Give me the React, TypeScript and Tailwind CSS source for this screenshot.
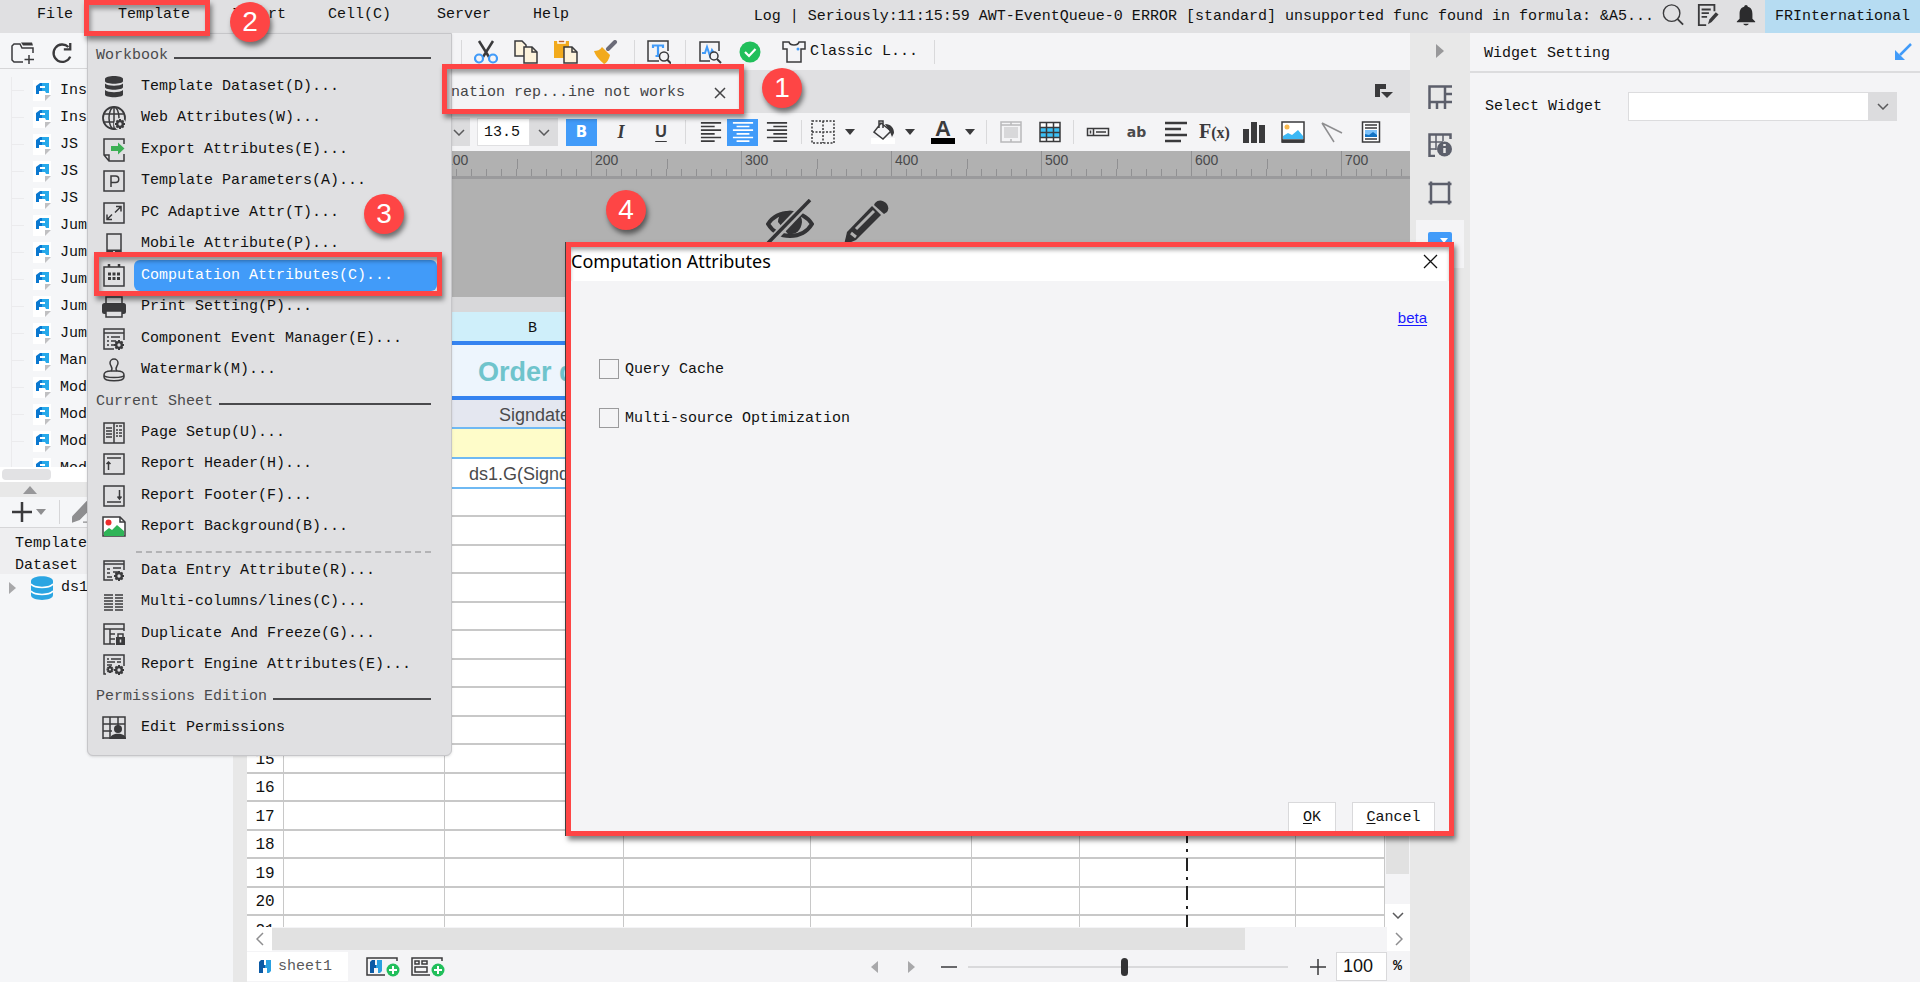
import type { ReactNode } from 'react'

const INK = '#3a3a3c'
const BLUE = '#419bf9'

const TREE = ['Ins', 'Ins', 'JS', 'JS', 'JS', 'Jum', 'Jum', 'Jum', 'Jum', 'Jum', 'Man', 'Mod', 'Mod', 'Mod', 'Mod']

function Icon({ size = 24, children }: { size?: number; children: ReactNode }) {
  return (
    <svg
      width={size}
      height={size}
      viewBox="0 0 24 24"
      fill="none"
      stroke={INK}
      strokeWidth="1.5"
      className="shrink-0"
      aria-hidden="true"
    >
      {children}
    </svg>
  )
}

function Gear({ x, y, r = 4 }: { x: number; y: number; r?: number }) {
  return (
    <g stroke="none">
      {[0, 45, 90, 135].map((a) => (
        <rect
          key={a}
          x={x - 1}
          y={y - r - 1}
          width="2"
          height={2 * r + 2}
          fill={INK}
          transform={`rotate(${a} ${x} ${y})`}
        />
      ))}
      <circle cx={x} cy={y} r={r} fill={INK} />
      <circle cx={x} cy={y} r={r / 2.4} fill="#e0e0e2" />
    </g>
  )
}

type MenuEntry = { label: string; icon: ReactNode; active?: boolean }

const WORKBOOK: MenuEntry[] = [
  {
    label: 'Template Dataset(D)...',
    icon: (
      <g fill={INK} stroke="none">
        <path d="M3 4c0-4 18-4 18 0v2c0 3.600-18 3.600-18 0z" />
        <path d="M3 8.500c3 3 15 3 18 0V12c0 3.600-18 3.600-18 0z" />
        <path d="M3 15c3 3 15 3 18 0v4.500c0 3.600-18 3.600-18 0z" />
      </g>
    ),
  },
  {
    label: 'Web Attributes(W)...',
    icon: (
      <>
        <circle cx="12" cy="12" r="11" strokeWidth="1.800" />
        <ellipse cx="12" cy="12" rx="5" ry="11" />
        <path d="M12 1v22M2 8h20M2 16h20" />
        <circle cx="18" cy="18" r="6" fill="#e0e0e2" stroke="none" />
        <Gear x={18} y={18} />
      </>
    ),
  },
  {
    label: 'Export Attributes(E)...',
    icon: (
      <>
        <path d="M22 6V1H2v16l5 6h15v-7M2 17h5v6" />
        <path d="M9 8h7V4.500l6.500 6-6.500 6V13H9z" fill="#3cb054" stroke="none" />
      </>
    ),
  },
  {
    label: 'Template Parameters(A)...',
    icon: (
      <>
        <rect x="2" y="2" width="20" height="20" />
        <path d="M9 18V7h4.500a3 3 0 0 1 0 6.500H9" />
      </>
    ),
  },
  {
    label: 'PC Adaptive Attr(T)...',
    icon: (
      <>
        <rect x="2" y="2" width="20" height="20" />
        <path d="M14 5.500h5v5M19 5.500l-6 6M10 18.500H5v-5M5 18.500l5-5" />
      </>
    ),
  },
  {
    label: 'Mobile Attribute(P)...',
    icon: (
      <>
        <rect x="5" y="2" width="14" height="20" />
        <path d="M5 19.500h14" strokeWidth="4" />
        <circle cx="12" cy="20" r="1" fill="#fff" stroke="none" />
      </>
    ),
  },
  {
    label: 'Computation Attributes(C)...',
    active: true,
    icon: (
      <>
        <rect x="2" y="3" width="20" height="19" />
        <path d="M7 0v3M17 0v3" strokeWidth="2.500" />
        <path d="M6 10h12M6 14.500h12" strokeWidth="3" strokeDasharray="3 1.500" />
      </>
    ),
  },
  {
    label: 'Print Setting(P)...',
    icon: (
      <>
        <rect x="4" y="2" width="16" height="7" />
        <rect y="8" width="24" height="11" rx="2.500" fill={INK} stroke="none" />
        <rect x="4" y="16" width="16" height="6" fill="#e0e0e2" />
      </>
    ),
  },
  {
    label: 'Component Event Manager(E)...',
    icon: (
      <>
        <path d="M22 13V2H2v20h10M2 6h20M5 10h2M9 10h9M5 14h2M9 14h5M5 18h2M9 18h3" />
        <Gear x={17} y={18} />
      </>
    ),
  },
  {
    label: 'Watermark(M)...',
    icon: (
      <>
        <path d="M9 13c3-3-1-5-1-8a4 4 0 0 1 8 0c0 3-4 5-1 8" />
        <path d="M9 13c-5 0-7 2-7 4s4 2.500 10 2.500 10-.5 10-2.500-2-4-7-4zM2 17v2c0 5 20 5 20 0v-2" />
      </>
    ),
  },
]

const SHEET: MenuEntry[] = [
  {
    label: 'Page Setup(U)...',
    icon: <path d="M2 2h20v20H2zM12 2v20M4 7h6M4 10h6M4 13h6M4 16h6M14 5h2M17 5h3M14 9h2M17 9h3M14 12h2M17 12h3M14 15h2M17 15h3" />,
  },
  {
    label: 'Report Header(H)...',
    icon: <path d="M2 2h20v20H2zM5 6h14M6.500 18V10M4.500 12l2-2 2 2" />,
  },
  {
    label: 'Report Footer(F)...',
    icon: <path d="M2 2h20v20H2zM5 18h14M17.500 6v9M15.500 12.500l2 2.500 2-2.500" />,
  },
  {
    label: 'Report Background(B)...',
    icon: (
      <>
        <path d="M1 2h17l5 5v14H1z" fill="#fff" />
        <path d="M18 2v5h5" />
        <circle cx="6.500" cy="7.500" r="3" fill="#ee2b2b" stroke="none" />
        <path d="M2 21v-4l5-4 3 2 5-5 7 6v5z" fill="#2fb457" stroke="none" />
      </>
    ),
  },
]

const DATA: MenuEntry[] = [
  {
    label: 'Data Entry Attribute(R)...',
    icon: (
      <>
        <path d="M22 11V2H2v19h9M2 5h20M5 10h3M11 9h8M5 14h3M11 13h5M5 18h5" />
        <Gear x={17} y={17} />
      </>
    ),
  },
  {
    label: 'Multi-columns/lines(C)...',
    icon: <path d="M2 5h9M13 5h8M2 8h9M13 8h8M2 11h9M13 11h8M2 14h9M13 14h8M2 17h9M13 17h8M2 20h9M13 20h8" />,
  },
  {
    label: 'Duplicate And Freeze(G)...',
    icon: (
      <>
        <path d="M22 9V2H2v20h11M2 7h20M8 7v15M8 12h5M8 17h5" />
        <rect x="14" y="15" width="9" height="8" fill={INK} stroke="none" />
        <path d="M16 15v-3h5v3" />
        <path d="M18.500 17.500v3" stroke="#e0e0e2" />
      </>
    ),
  },
  {
    label: 'Report Engine Attributes(E)...',
    icon: (
      <>
        <path d="M22 13V2H2v19h2M5 6h2M9 6h10M5 9h8M15 9h4M5 12h5" />
        <Gear x={8} y={16.500} r={2.500} />
        <Gear x={17} y={17} />
      </>
    ),
  },
]

const PERMISSIONS: MenuEntry[] = [
  {
    label: 'Edit Permissions',
    icon: (
      <>
        <path d="M1 23V1h22v22M1 8h22M1 15h9M8 1v22M16 1v10M1 22h8" />
        <circle cx="16" cy="13" r="4" fill={INK} stroke="none" />
        <path d="M8 23c0-7 16-7 16 0z" fill={INK} stroke="none" />
      </>
    ),
  },
]

function MenuList({ items }: { items: MenuEntry[] }) {
  return (
    <ul>
      {items.map((item) => (
        <li key={item.label} className="h-[31px] even:h-8 flex items-center pl-[14px] pr-[14px]">
          <Icon>{item.icon}</Icon>
          <button
            className={
              item.active
                ? 'ml-2 flex-1 h-[31px] rounded-md pl-[7px] text-left whitespace-nowrap bg-[#419bf9] text-white'
                : 'ml-2 flex-1 h-[31px] rounded-md pl-[7px] text-left whitespace-nowrap'
            }
          >
            {item.label}
          </button>
        </li>
      ))}
    </ul>
  )
}

function MenuHeading({ children }: { children: ReactNode }) {
  return (
    <div className="h-[31px] flex items-center gap-[6px] pl-2 pr-5 text-[#4a4a4c]">
      <span>{children}</span>
      <span className="flex-1 h-[2px] mt-1 bg-[#4a4a4c]" />
    </div>
  )
}

function TemplateMenu() {
  return (
    <div className="absolute z-20 left-[87px] top-[33px] w-[365px] pt-1.5 pb-3 bg-[#e0e0e2] border border-[#c6c6c9] rounded-b-md shadow-sm">
      <MenuHeading>Workbook</MenuHeading>
      <MenuList items={WORKBOOK} />
      <MenuHeading>Current Sheet</MenuHeading>
      <MenuList items={SHEET} />
      <div className="h-3 pt-2 ml-12 mr-5">
        <div className="border-t-2 border-dashed border-[#b3b3b5]" />
      </div>
      <MenuList items={DATA} />
      <MenuHeading>Permissions Edition</MenuHeading>
      <MenuList items={PERMISSIONS} />
    </div>
  )
}

function MenuBar() {
  return (
    <header className="h-[33px] shrink-0 flex items-center bg-[#e0e0e2]">
      <nav className="flex pl-[37px] pb-1">
        <button className="w-[81px] text-left">File</button>
        <button className="w-[114px] text-left">Template</button>
        <button className="w-24 text-left">Insert</button>
        <button className="w-[109px] text-left">Cell(C)</button>
        <button className="w-24 text-left">Server</button>
        <button className="text-left">Help</button>
      </nav>
      <div className="flex-1 flex justify-end items-center h-[33px] overflow-hidden">
        <span className="whitespace-nowrap">
          Log | Seriously:11:15:59 AWT-EventQueue-0 ERROR [standard] unsupported func found in formula: &amp;A5...
        </span>
        <button aria-label="Search" className="ml-2 pb-1 w-[22px]">
          <Icon size={22}>
            <circle cx="10.500" cy="10" r="9" />
            <path d="M17 16.500l6 6" strokeWidth="2" />
          </Icon>
        </button>
        <button aria-label="Notes" className="ml-[13px] pb-1 w-[22px]">
          <Icon size={22}>
            <path d="M19 8V1H2v22h8M5 6h10M5 10h8M5 14h6" strokeWidth="2" />
            <path d="M12 22l1.500-5 7-8 3 2.500-7.500 8z" fill={INK} stroke="none" />
          </Icon>
        </button>
        <button aria-label="Notifications" className="ml-4 pb-1 w-[22px]">
          <Icon size={22}>
            <path d="M12 1c-1 0-2 1-2 2-4 1-5 4-5 8v5l-3 3v1h20v-1l-3-3v-5c0-4-1-7-5-8 0-1-1-2-2-2zM9 21.500h6c-1 2.500-5 2.500-6 0z" fill="#2b2b2d" stroke="none" />
          </Icon>
        </button>
        <button className="ml-2 h-[33px] px-[10px] bg-[#b6dcf2]">FRInternational</button>
      </div>
    </header>
  )
}

function FileIcon() {
  return (
    <svg width="18" height="21" viewBox="0 0 18 21" aria-hidden="true" className="shrink-0">
      <path d="M0 0h18v15l-6 6H0z" fill="#fff" />
      <path d="M12 15h6l-6 6z" fill="#c0c0c2" />
      <path d="M3 6l4-3h3v3H7v2h3v3H6v3H3z" fill="#0a78d0" />
      <path d="M9 3h7v10h-3l-1-2H9V8h3V6H9z" fill="#27a9ea" />
    </svg>
  )
}

function LeftPanel() {
  return (
    <aside className="w-[233px] shrink-0 flex flex-col bg-[#f5f6f8] overflow-hidden">
      <div className="h-9 flex items-center gap-4 pl-[11px] pt-1 border-b border-[#d6d6d8]">
        <button aria-label="New folder">
          <Icon>
            <path d="M12 21H3l-2-2V5l2-2h6l2 4h11v5M18 14v9M13.500 18.500h9.500" />
            <path d="M10 1.500h11l1 3H12z" fill={INK} stroke="none" />
          </Icon>
        </button>
        <button aria-label="Refresh">
          <Icon size={22}>
            <path d="M19 5.500A9.500 9.500 0 1 0 21 16" strokeWidth="2.500" />
            <path d="M14 8h7V1" strokeWidth="2.500" />
          </Icon>
        </button>
      </div>
      <ul className="h-[398px] pt-2 overflow-hidden">
        {TREE.map((name, i) => (
          <li key={i} className="h-[27px] flex items-center ml-[11px] border-l border-[#ebebed]">
            <span className="w-3 mr-[9px] border-t border-[#ebebed]" />
            <FileIcon />
            <span className="ml-[9px]">{name}</span>
          </li>
        ))}
      </ul>
      <div className="h-[15px] bg-white px-0.5 py-[2px]">
        <div className="w-[49px] h-[11px] rounded bg-[#e2e2e4]" />
      </div>
      <div className="h-[15px] bg-[#e8e8e8] pl-[23px] flex items-center">
        <svg width="14" height="8" viewBox="0 0 14 8" aria-hidden="true"><path d="M0 8l7-8 7 8z" fill="#98989a" /></svg>
      </div>
      <div className="h-[31px] flex items-center pl-3 border-b border-[#d6d6d8]">
        <button aria-label="Add dataset" className="flex items-center gap-1">
          <Icon size={20}><path d="M12 0v24M0 12h24" strokeWidth="3" /></Icon>
          <Caret color="#8e8e90" />
        </button>
        <span className="w-px h-6 ml-[13px] mr-3 bg-[#d6d6d8]" />
        <button aria-label="Edit dataset">
          <Icon size={22}><path d="M1 17L16 1l6 5L8 20l-8 3zM12 23h10" fill="#8e8e90" stroke="#8e8e90" /></Icon>
        </button>
      </div>
      <div className="h-[46px] pl-[15px] pt-[5px] leading-[22px] bg-[#eeeef0]">
        <div>Template</div>
        <div>Dataset</div>
      </div>
      <div className="h-[27px] flex items-center pl-[9px]">
        <svg width="7" height="12" viewBox="0 0 7 12" aria-hidden="true"><path d="M0 0l7 6-7 6z" fill="#a8a8aa" /></svg>
        <svg width="22" height="24" viewBox="0 0 22 24" aria-hidden="true" className="ml-[15px] mr-2">
          <path d="M0 5c0-6.500 22-6.500 22 0v14c0 6.500-22 6.500-22 0z" fill="#2aa5e2" />
          <path d="M0 8c3 4.500 19 4.500 22 0M0 15c3 4.500 19 4.500 22 0" fill="none" stroke="#fff" strokeWidth="1.500" />
        </svg>
        <span>ds1</span>
      </div>
    </aside>
  )
}

function Caret({ color = INK }: { color?: string }) {
  return (
    <svg width="10" height="6" viewBox="0 0 10 6" aria-hidden="true" className="shrink-0">
      <path d="M0 0h10L5 6z" fill={color} />
    </svg>
  )
}

function Chevron() {
  return (
    <svg width="12" height="7" viewBox="0 0 12 7" aria-hidden="true">
      <path d="M1 1l5 5 5-5" fill="none" stroke="#5a5a5c" strokeWidth="1.500" />
    </svg>
  )
}

function Sep() {
  return <span className="w-px h-6 shrink-0 bg-[#d9d9db]" />
}

function Toolbar() {
  return (
    <div className="h-[37px] shrink-0 flex items-center pl-[214px] bg-[#f4f4f6]">
      <Sep />
      <div className="flex gap-4 ml-3 mr-4">
        <button aria-label="Cut">
          <Icon>
            <path d="M5 1l10 16M19 1L9 17" strokeWidth="2.500" />
            <circle cx="5" cy="18.500" r="4" stroke={BLUE} strokeWidth="2.200" />
            <circle cx="19" cy="18.500" r="4" stroke={BLUE} strokeWidth="2.200" />
          </Icon>
        </button>
        <button aria-label="Copy">
          <Icon>
            <path d="M1 1h7l4 4v11H1z" fill="#fdf3dc" />
            <path d="M10 7h8l5 5v11H10z" fill="#fdf3dc" />
            <path d="M18 7v5h5" />
          </Icon>
        </button>
        <button aria-label="Paste">
          <Icon>
            <path d="M0 1h15v17H0z" fill="#f2aa1c" stroke="none" />
            <path d="M4 0h7v3H4z" fill="#c0622b" stroke="#fff" />
            <path d="M10 7h8l5 5v11H10z" fill="#fdf3dc" />
            <path d="M18 7v5h5" />
          </Icon>
        </button>
        <button aria-label="Format brush">
          <Icon>
            <path d="M14 9l7-7" stroke="#6b6b78" strokeWidth="4" strokeLinecap="round" />
            <path d="M8 7l8 8c-1 4-3 8-6 9C6 20 2 17 0 11c3 0 6-1 8-4z" fill="#f2aa1c" stroke="none" />
          </Icon>
        </button>
      </div>
      <Sep />
      <div className="mx-3 flex">
        <button aria-label="Find text">
          <Icon>
            <path d="M21 11V1H1v20h11" />
            <path d="M6 8V5.500h10V8M11 6v10M8.500 16h5" stroke={BLUE} strokeWidth="2.200" />
            <circle cx="17" cy="16.500" r="4.500" fill="#f4f4f6" />
            <path d="M20 19.500l4 4" strokeWidth="2" />
          </Icon>
        </button>
      </div>
      <span className="w-0.5" />
      <Sep />
      <div className="flex items-center gap-4 ml-3 mr-4">
        <button aria-label="Performance check">
          <Icon>
            <path d="M21 11V2H2v19h10" />
            <path d="M4 13h3l2-6 3 9 2-6 2 3" stroke={BLUE} strokeWidth="2" />
            <circle cx="16" cy="16" r="4" fill="#f4f4f6" />
            <path d="M19 19l4 4" strokeWidth="2" />
          </Icon>
        </button>
        <button aria-label="Validated">
          <Icon>
            <circle cx="12" cy="12" r="10.500" fill="#21bf5b" stroke="none" />
            <path d="M7 12l4 4 6.500-7" stroke="#fff" strokeWidth="2.200" />
          </Icon>
        </button>
        <button className="flex items-center gap-1 ml-1 whitespace-nowrap">
          <Icon>
            <path d="M1 2h6c1 4 9 4 10 0h6v7h-4v13H5V9H1z" />
            <circle cx="16" cy="9" r="1.500" fill={BLUE} stroke="none" />
          </Icon>
          Classic L...
        </button>
      </div>
      <Sep />
    </div>
  )
}

function TabBar() {
  return (
    <div className="h-[43px] shrink-0 flex items-center justify-between bg-[#e0e0e2] pl-[200px] pr-[17px]">
      <div className="h-[43px] flex items-center bg-[#f4f4f6] pl-1 pr-[18px] pt-[2px] text-[#444446] whitespace-nowrap">
        <span>nation rep...ine not works</span>
        <button aria-label="Close tab" className="ml-[29px]">
          <svg width="12" height="12" viewBox="0 0 12 12" aria-hidden="true">
            <path d="M1 1l10 10M11 1L1 11" stroke="#444446" strokeWidth="1.500" />
          </svg>
        </button>
      </div>
      <button aria-label="List open templates">
        <svg width="18" height="15" viewBox="0 0 18 15" aria-hidden="true">
          <path d="M0 0h11v5H5v8H0z" fill={INK} />
          <path d="M6 8h12l-6 6z" fill={INK} />
        </svg>
      </button>
    </div>
  )
}

function Tool({ label, children }: { label: string; children: ReactNode }) {
  return (
    <button aria-label={label} className="w-[39px] h-[27px] shrink-0 flex items-center justify-center">
      {children}
    </button>
  )
}

function FormatBar() {
  return (
    <div className="h-[38px] shrink-0 flex items-center pl-[200px] bg-[#f4f4f6]">
      <button aria-label="Font family" className="w-[23px] h-7 flex items-center justify-center bg-[#dcdcde]">
        <Chevron />
      </button>
      <input
        aria-label="Font size"
        defaultValue="13.5"
        className="w-[53px] h-7 ml-[7px] pl-[6px] bg-white border border-[#e0e0e2]"
      />
      <button aria-label="Font size list" className="w-7 h-7 flex items-center justify-center bg-[#dcdcde]">
        <Chevron />
      </button>
      <button className="w-[31px] h-[27px] ml-2 bg-[#419bf9] text-white font-bold font-['DejaVu_Sans']">B</button>
      <button className="w-10 ml-1 text-lg leading-5 italic font-bold font-['Liberation_Serif'] text-[#3a3a3c]">I</button>
      <button className="w-10 mr-1 font-bold underline underline-offset-4 font-['Liberation_Sans'] text-base leading-5 text-[#3a3a3c]">U</button>
      <Sep />
      <button aria-label="Align left" className="w-[33px] ml-2 flex justify-center">
        <Icon size={22}><path d="M1 2h22M1 6h15M1 10h22M1 14h15M1 18h22M1 22h15" strokeWidth="1.800" /></Icon>
      </button>
      <button aria-label="Align center" className="w-[31px] h-[27px] flex justify-center items-center bg-[#419bf9]">
        <Icon size={22}><path d="M1 2h22M5 6h14M1 10h22M5 14h14M1 18h22M5 22h14" strokeWidth="1.800" stroke="#fff" /></Icon>
      </button>
      <button aria-label="Align right" className="w-[33px] ml-0.5 mr-2 flex justify-center">
        <Icon size={22}><path d="M1 2h22M8 6h15M1 10h22M8 14h15M1 18h22M8 22h15" strokeWidth="1.800" /></Icon>
      </button>
      <Sep />
      <button aria-label="Borders" className="ml-[9px] flex items-center gap-[10px]">
        <Icon><path d="M1 1h22v22H1zM12 1v22M1 12h22" strokeDasharray="2 1.500" /></Icon>
        <Caret />
      </button>
      <button aria-label="Fill color" className="ml-4 flex items-center gap-[10px]">
        <Icon>
          <path d="M0 18h24v6H0z" fill="#fff" stroke="none" />
          <path d="M10 3l10 8-8 8-9-7zM8 8V1h4v7" />
          <path d="M14 4c6 0 9 4 9 9l-2 4-2-5z" fill={INK} stroke="none" />
        </Icon>
        <Caret />
      </button>
      <button aria-label="Font color" className="ml-4 flex items-center gap-[10px]">
        <span className="w-6 text-center text-[22px] leading-[17px] h-6 border-b-[6px] border-black font-bold font-['Liberation_Sans'] text-[#3a3a3c]">A</span>
        <Caret />
      </button>
      <span className="w-[11px]" />
      <Sep />
      <span className="w-1" />
      <Tool label="Merge cells">
        <Icon><path d="M2 2h20v20H2zM2 5h20M12 2v3M12 19v3" stroke="#b8b8ba" /><path d="M5 7h14v11H5z" fill="#d8d8da" stroke="none" /></Icon>
      </Tool>
      <Tool label="Table">
        <Icon>
          <path d="M2 3h20v19H2z" fill="#fff" stroke="none" />
          <path d="M2 8h20v9H2z" fill="#3cc0f5" stroke="none" />
          <path d="M2 2.500h20v19H2zM2 7.500h20M2 12.500h20M2 17.500h20M8.500 2v20M15.500 2v20" strokeWidth="1.500" />
        </Icon>
      </Tool>
      <span className="w-1" />
      <Sep />
      <span className="w-1" />
      <Tool label="Widget">
        <Icon><path d="M1.500 8.500h21v7h-21zM7.500 8v8M4.500 10.500v3M10 12h10" strokeWidth="1.500" /></Icon>
      </Tool>
      <Tool label="Text">
        <span className="font-['DejaVu_Sans'] font-bold text-sm text-[#4a4a4c]">ab</span>
      </Tool>
      <Tool label="Rich text">
        <Icon><path d="M1 3h22M1 9h16M1 15h22M1 21h16" strokeWidth="2.500" /></Icon>
      </Tool>
      <Tool label="Formula">
        <span className="font-['Liberation_Serif'] font-bold text-xl leading-6 text-[#3a3a3c]">
          F<span className="text-base">(x)</span>
        </span>
      </Tool>
      <Tool label="Chart">
        <Icon><path d="M1 9h6v14H1zM9 2h6v21H9zM17 5h6v18h-6z" fill={INK} stroke="none" /></Icon>
      </Tool>
      <Tool label="Image">
        <Icon>
          <path d="M1 2h22v20H1z" fill="#fff" />
          <circle cx="6" cy="7" r="2.500" fill="#f8b84e" stroke="none" />
          <path d="M2 19v-3l5-3 4 2 6-5 5 6v3z" fill="#3cb8f5" stroke="none" />
          <path d="M1 21h22" strokeWidth="3.500" />
        </Icon>
      </Tool>
      <Tool label="Slash">
        <Icon><path d="M2 3l20 10M2 3l12 19" stroke="#8e8e90" /></Icon>
      </Tool>
      <Tool label="Sub report">
        <Icon>
          <path d="M3.500 2h17v20h-17z" fill="#fff" />
          <path d="M6 5h12M6 8h12M6 19h12" />
          <path d="M6 10h12v7H6z" fill="#7cc2fb" stroke="none" />
          <path d="M6 17v-3l4 1 4-3 4 3v2z" fill="#1273c4" stroke="none" />
        </Icon>
      </Tool>
    </div>
  )
}

function Ruler() {
  return (
    <div className="h-7 shrink-0 flex pl-[44px] bg-[#b1b1b1] border-b-[3px] border-[#9a9a9c] overflow-hidden font-['Liberation_Sans'] text-sm leading-4 text-[#4a4a4c]">
      {[0, 100, 200, 300, 400, 500, 600, 700].map((n) => (
        <div key={n} className="w-[150px] shrink-0 border-l border-[#909092]">
          <div className="h-[18px] flex">
            <span className="w-1/2 pl-[3px] pt-px">{n}</span>
            <span className="flex-1 mt-2 border-l border-[#909092]" />
          </div>
          <div className="h-[7px] flex">
            {Array.from({ length: 10 }, (_, i) => (
              <span key={i} className={i === 0 ? 'flex-1' : 'flex-1 border-l border-[#909092]'} />
            ))}
          </div>
        </div>
      ))}
    </div>
  )
}

function Canvas() {
  return (
    <div className="h-[118px] shrink-0 flex items-start gap-[30px] pl-[519px] pt-5 bg-[#b1b1b1]">
      <svg width="48" height="48" viewBox="0 0 48 48" aria-hidden="true">
        <path d="M2 25C12 10 36 10 46 25 36 41 12 41 2 25z" fill="none" stroke="#333335" strokeWidth="4" />
        <path d="M12 23c0-15 24-15 24 0-1 10-8 13-14 12z" fill="#333335" />
        <path d="M43 2L3 44" stroke="#b1b1b1" strokeWidth="8" />
        <path d="M44 1L2 44" stroke="#333335" strokeWidth="3.500" />
      </svg>
      <svg width="46" height="48" viewBox="0 0 46 48" aria-hidden="true">
        <path d="M0 46l3-13L28 7l9 9L12 41z" fill="#333335" />
        <path d="M7 34l5 4M12 30L30 12" stroke="#b1b1b1" strokeWidth="3" />
        <path d="M31 4c6-7 17 2 12 9l-3 2-10-9z" fill="#333335" />
      </svg>
    </div>
  )
}

function Spreadsheet() {
  const cell = 'border-r border-b-2 border-[#c8c8c8]'
  const blank = [0, 1, 2, 3, 4, 5, 6, 7]
  return (
    <div className="flex-1 min-h-0 flex bg-[#f4f4f6]">
      <div className="flex-1 min-w-0 overflow-hidden bg-white">
        <div className="h-[15px] bg-[#d8d8da]" />
        <table className="w-full table-fixed border-separate border-spacing-0 bg-white">
          <colgroup>
            <col className="w-[37px]" />
            <col className="w-[161px]" />
            <col className="w-[179px]" />
            <col className="w-[187px]" />
            <col className="w-[161px]" />
            <col className="w-[108px]" />
            <col className="w-[108px]" />
            <col className="w-[108px]" />
            <col />
          </colgroup>
          <thead>
            <tr className="h-[29px] bg-[#cfeffa]">
              <th />
              <th />
              <th className="p-0 pt-1 pr-1 font-normal">B</th>
              <th colSpan={6} />
            </tr>
          </thead>
          <tbody>
            <tr className="h-[59px] bg-[#edf5fd]">
              <td className="bg-white border-r border-[#c8c8c8]" />
              <td className="border-y-4 border-[#3583f0]" />
              <td className="border-y-4 border-[#3583f0] p-0 pt-0.5 pl-[33px] whitespace-nowrap text-[27px] leading-8 font-bold font-['Liberation_Sans'] text-[#6fc4cc]">
                Order details
              </td>
              <td colSpan={6} className="border-y-4 border-[#3583f0]" />
            </tr>
            <tr className="h-[29px] bg-[#e4e7f0]">
              <td className="bg-white border-r border-[#c8c8c8]" />
              <td className="border-b-2 border-[#6fb9f3]" />
              <td className="border-b-2 border-[#6fb9f3] p-0 pt-0.5 text-center text-lg leading-6 font-['Liberation_Sans'] text-[#4a4a4c]">Signdate</td>
              <td colSpan={6} className="border-b-2 border-[#6fb9f3]" />
            </tr>
            <tr className="h-[30px] bg-[#fefcc9]">
              <td className="bg-white border-r border-[#c8c8c8]" />
              <td colSpan={8} className="border-b-2 border-[#6fb9f3]" />
            </tr>
            <tr className="h-[30px]">
              <td className="border-r border-[#c8c8c8]" />
              <td className="border-b-2 border-[#6fb9f3]" />
              <td className="border-b-2 border-[#6fb9f3] p-0 pt-0.5 text-center text-lg leading-6 font-['Liberation_Sans'] text-[#4a4a4c]">ds1.G(Signdate)</td>
              <td colSpan={6} className="border-b-2 border-[#6fb9f3]" />
            </tr>
            {Array.from({ length: 16 }, (_, i) => i + 6).map((n) => (
              <tr key={n} className="h-7 even:h-[29px]">
                <td className={`${cell} p-0 pt-0.5 text-center text-base leading-5`}>{n >= 15 && n}</td>
                {blank.map((c) => (
                  <td
                    key={c}
                    className={
                      c === 5
                        ? 'relative border-b-2 border-[#c8c8c8]'
                        : cell
                    }
                  >
                    {c === 5 && (
                      <svg width="2" height="29" className="absolute right-0 top-0" aria-hidden="true">
                        <path d="M1 0v29" stroke="#222" strokeWidth="2" strokeDasharray="12 6 3 6" />
                      </svg>
                    )}
                  </td>
                ))}
              </tr>
            ))}
          </tbody>
        </table>
      </div>
      <div className="w-[25px] shrink-0 flex flex-col">
        <div className="flex-1 mx-px bg-[#e1e1e1]" />
        <div className="h-[30px]" />
        <button aria-label="Scroll down" className="h-[23px] flex items-center justify-center bg-white">
          <Chevron />
        </button>
      </div>
    </div>
  )
}

function SheetBar() {
  return (
    <>
      <div className="h-6 shrink-0 flex bg-[#f4f4f6]">
        <button aria-label="Scroll left" className="w-[25px] flex items-center justify-center bg-white">
          <svg width="8" height="14" viewBox="0 0 8 14" aria-hidden="true"><path d="M7 1L1 7l6 6" fill="none" stroke="#8e8e90" strokeWidth="1.500" /></svg>
        </button>
        <div className="flex-1 my-px bg-[#e1e1e1]" />
        <div className="w-[142px]" />
        <button aria-label="Scroll right" className="w-[23px] flex items-center justify-center bg-white">
          <svg width="8" height="14" viewBox="0 0 8 14" aria-hidden="true"><path d="M1 1l6 6-6 6" fill="none" stroke="#8e8e90" strokeWidth="1.500" /></svg>
        </button>
      </div>
      <div className="h-[31px] shrink-0 flex items-center bg-[#f4f4f6]">
        <button className="w-[101px] h-[29px] flex items-center gap-[7px] pl-3 bg-white text-[#5a5a5c]">
          <svg width="12" height="13" viewBox="0 0 12 13" aria-hidden="true">
            <path d="M0 2l2-2h3v5h2v3H4v5H0z" fill="#0b5aa5" />
            <path d="M7 0h5v11l-2 2H8V8H6V5h1z" fill="#2aa0e0" />
          </svg>
          sheet1
        </button>
        <button aria-label="Add report sheet" className="ml-[18px]">
          <svg width="34" height="20" viewBox="0 0 34 20" aria-hidden="true">
            <path d="M31 4V1H1v17h18" fill="none" stroke={INK} strokeWidth="1.500" />
            <path d="M4 5l2-2h3v5h2v3H8v5H4z" fill="#0b5aa5" />
            <path d="M11 3h5v11l-2 2h-2v-5h-2V8h1z" fill="#2aa0e0" />
            <circle cx="27" cy="13" r="6.500" fill="#21bf5b" />
            <path d="M27 9v8M23 13h8" stroke="#fff" strokeWidth="2" />
          </svg>
        </button>
        <button aria-label="Add form sheet" className="ml-[11px]">
          <svg width="34" height="20" viewBox="0 0 34 20" aria-hidden="true">
            <path d="M31 4V1H1v17h18M4 4h4v3H4zM11 4h5v3h-5zM4 10h12v5H4z" fill="none" stroke={INK} strokeWidth="1.500" />
            <circle cx="27" cy="13" r="6.500" fill="#21bf5b" />
            <path d="M27 9v8M23 13h8" stroke="#fff" strokeWidth="2" />
          </svg>
        </button>
        <div className="ml-auto flex items-center">
          <button aria-label="Previous sheet">
            <svg width="7" height="12" viewBox="0 0 7 12" aria-hidden="true"><path d="M7 0v12L0 6z" fill="#a8a8aa" /></svg>
          </button>
          <button aria-label="Next sheet" className="ml-[30px] mr-[26px]">
            <svg width="7" height="12" viewBox="0 0 7 12" aria-hidden="true"><path d="M0 0v12l7-6z" fill="#a8a8aa" /></svg>
          </button>
          <button aria-label="Zoom out">
            <svg width="16" height="16" viewBox="0 0 16 16" aria-hidden="true"><path d="M0 8h16" stroke={INK} strokeWidth="1.500" /></svg>
          </button>
          <input
            type="range"
            aria-label="Zoom"
            defaultValue={49}
            className="appearance-none w-[320px] h-5 mx-[11px] bg-transparent [&::-webkit-slider-runnable-track]:h-[2px] [&::-webkit-slider-runnable-track]:bg-[#d9d9db] [&::-webkit-slider-thumb]:appearance-none [&::-webkit-slider-thumb]:w-[7px] [&::-webkit-slider-thumb]:h-[18px] [&::-webkit-slider-thumb]:-mt-2 [&::-webkit-slider-thumb]:rounded-full [&::-webkit-slider-thumb]:bg-[#333335]"
          />
          <button aria-label="Zoom in" className="ml-[11px]">
            <svg width="16" height="16" viewBox="0 0 16 16" aria-hidden="true"><path d="M0 8h16M8 0v16" stroke={INK} strokeWidth="1.500" /></svg>
          </button>
          <input
            id="zoom-value"
            defaultValue="100"
            className="w-[51px] h-[29px] ml-[10px] pl-1.5 bg-white border border-[#d9d9db] font-['Liberation_Sans'] text-lg"
          />
          <label htmlFor="zoom-value" className="ml-1.5 mr-2 font-bold">%</label>
        </div>
      </div>
    </>
  )
}

function SideStrip() {
  return (
    <div className="w-[60px] shrink-0 flex flex-col items-center bg-[#e8e8e8] pt-[11px]">
      <button aria-label="Collapse panel">
        <svg width="8" height="14" viewBox="0 0 8 14" aria-hidden="true"><path d="M0 0l8 7-8 7z" fill="#98989a" /></svg>
      </button>
      <div className="flex flex-col gap-6 mt-[27px]">
        <button aria-label="Cell element">
          <svg width="24" height="24" viewBox="0 0 24 24" fill="none" stroke="#5c5f6b" strokeWidth="2.500" aria-hidden="true">
            <path d="M24 1.500H1.500V24M1 17h23M17 1v23M9 17v7M17 9h7" />
          </svg>
        </button>
        <button aria-label="Cell attributes">
          <svg width="24" height="24" viewBox="0 0 24 24" fill="none" stroke="#5c5f6b" strokeWidth="2.500" aria-hidden="true">
            <path d="M7 23H1.500V1.500h21V6" />
            <path d="M2 9h13M2 16h6M8 1v16M15 2v6" strokeWidth="1.500" />
            <circle cx="16.500" cy="16" r="7.500" fill="#5c5f6b" stroke="none" />
            <path d="M16.500 15v5M16.500 11v2" stroke="#e8e8e8" />
          </svg>
        </button>
        <button aria-label="Floating element">
          <svg width="24" height="24" viewBox="0 0 24 24" fill="none" stroke="#5c5f6b" strokeWidth="2.500" aria-hidden="true">
            <path d="M3 3h18v18H3zM0.500 3h23M0.500 21h23M3 0.500v23M21 0.500v23" />
          </svg>
        </button>
      </div>
      <button aria-label="Widget setting" className="mt-[15px] w-12 h-12 flex items-center justify-center bg-[#f4f4f6]">
        <svg width="24" height="24" viewBox="0 0 24 24" aria-hidden="true">
          <rect width="24" height="24" rx="2" fill={BLUE} />
          <path d="M12 6h8l-4 5z" fill="#fff" />
        </svg>
      </button>
    </div>
  )
}

function WidgetPanel() {
  return (
    <aside className="w-[450px] shrink-0 bg-[#f4f4f6]">
      <div className="h-10 flex items-center justify-between pl-[14px] pr-2 pt-[3px] border-b-2 border-[#dcdcde]">
        <h2>Widget Setting</h2>
        <button aria-label="Dock panel" className="pb-1">
          <svg width="18" height="18" viewBox="0 0 18 18" aria-hidden="true">
            <path d="M17 1L6 12" stroke={BLUE} strokeWidth="2.500" />
            <path d="M1 7v10h10z" fill={BLUE} />
          </svg>
        </button>
      </div>
      <div className="flex items-center pl-[15px] pr-[23px] pt-[19px]">
        <label htmlFor="widget" className="pt-px">Select Widget</label>
        <div className="relative flex-1 ml-[26px]">
          <select id="widget" className="appearance-none block w-full h-[29px] bg-white border border-[#dcdcde]">
            <option value=""></option>
          </select>
          <span className="pointer-events-none absolute inset-y-0 right-0 w-[29px] flex items-center justify-center bg-[#dcdcde]">
            <Chevron />
          </span>
        </div>
      </div>
    </aside>
  )
}

function Checkbox({ id, label }: { id: string; label: string }) {
  return (
    <div className="flex items-center gap-1.5 h-5">
      <input id={id} type="checkbox" className="appearance-none w-5 h-5 bg-[#f4f4f6] border border-[#9a9a9c]" />
      <label htmlFor={id} className="pt-px">{label}</label>
    </div>
  )
}

const MARK_SHADOW = 'shadow-[2px_4px_5px_rgba(0,0,0,0.45),inset_2px_4px_4px_rgba(0,0,0,0.35)]'

function Dialog() {
  return (
    <div
      role="dialog"
      aria-label="Computation Attributes"
      className="absolute z-10 left-[566px] top-[242px] w-[888px] h-[594px] flex flex-col border-[5px] border-[#fe4545] bg-[#f4f4f6] shadow-[2px_4px_5px_rgba(0,0,0,0.5),-1px_0_0_#444]"
    >
      <div className="h-[34px] flex items-start justify-between bg-white pr-[11px] shadow-[inset_0_4px_4px_-1px_rgba(0,0,0,0.35)]">
        <h1 className="pt-0.5 font-['Noto_Sans'] text-lg leading-6 text-black">Computation Attributes</h1>
        <button aria-label="Close" className="pt-[7px]">
          <svg width="15" height="15" viewBox="0 0 15 15" aria-hidden="true">
            <path d="M1 1l13 13M14 1L1 14" stroke="#111" strokeWidth="1.300" />
          </svg>
        </button>
      </div>
      <div className="text-right pr-[22px] pt-[27px] font-['Liberation_Sans'] text-[15px] leading-5">
        <a href="#beta" className="text-[#1a1aff] underline underline-offset-2">beta</a>
      </div>
      <div className="flex flex-col gap-[29px] pl-7 pt-[31px]">
        <Checkbox id="query-cache" label="Query Cache" />
        <Checkbox id="multi-source" label="Multi-source Optimization" />
      </div>
      <div className="mt-auto flex justify-end gap-4 pr-[14px]">
        <button className="w-12 h-[29px] pt-0.5 bg-white border border-b-0 border-[#d9d9db]"><u className="underline-offset-2">O</u>K</button>
        <button className="w-[83px] h-[29px] pt-0.5 bg-white border border-b-0 border-[#d9d9db]"><u className="underline-offset-2">C</u>ancel</button>
      </div>
    </div>
  )
}

function Step({ n, place }: { n: number; place: string }) {
  return (
    <span
      className={`absolute ${place} w-10 h-10 rounded-full flex items-center justify-center bg-[#fe4545] text-white text-[28px] font-['Liberation_Sans'] shadow-[2px_4px_5px_rgba(0,0,0,0.5)]`}
    >
      {n}
    </span>
  )
}

export default function App() {
  return (
    <div className="relative h-screen flex flex-col overflow-hidden bg-[#f4f4f6] font-['Liberation_Mono',monospace] text-[15px] leading-5 text-[#111]">
      <MenuBar />
      <div className="flex-1 min-h-0 flex">
        <LeftPanel />
        <div className="w-[14px] shrink-0 bg-[#e8e8e8]" />
        <main className="flex-1 min-w-0 flex flex-col">
          <Toolbar />
          <TabBar />
          <FormatBar />
          <Ruler />
          <Canvas />
          <Spreadsheet />
          <SheetBar />
        </main>
        <SideStrip />
        <WidgetPanel />
      </div>

      <TemplateMenu />
      <Dialog />

      {/* Step markers */}
      <div className={`absolute z-30 pointer-events-none left-[442px] top-16 w-[302px] h-[50px] border-[5px] border-[#fe4545] ${MARK_SHADOW}`} />
      <div className={`absolute z-30 pointer-events-none left-[84px] top-0 w-[126px] h-9 border-[5px] border-[#fe4545] ${MARK_SHADOW}`} />
      <div className={`absolute z-30 pointer-events-none left-[94px] top-[252px] w-[348px] h-11 border-[5px] border-[#fe4545] ${MARK_SHADOW}`} />
      <Step n={1} place="left-[762px] top-[68px] z-30" />
      <Step n={2} place="left-[230px] top-[2px] z-30" />
      <Step n={3} place="left-[364px] top-[194px] z-30" />
      <Step n={4} place="left-[606px] top-[190px]" />
    </div>
  )
}
